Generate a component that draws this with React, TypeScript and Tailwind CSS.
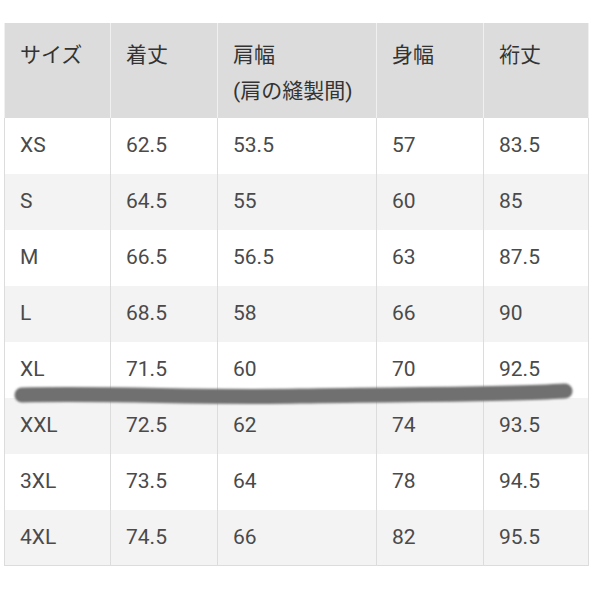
import React from "react";

const rows = [
    ["XS", "62.5", "53.5", "57", "83.5"],
    ["S", "64.5", "55", "60", "85"],
    ["M", "66.5", "56.5", "63", "87.5"],
    ["L", "68.5", "58", "66", "90"],
    ["XL", "71.5", "60", "70", "92.5"],
    ["XXL", "72.5", "62", "74", "93.5"],
    ["3XL", "73.5", "64", "78", "94.5"],
    ["4XL", "74.5", "66", "82", "95.5"],
];

const widths = ["w-[106px]", "w-[107px]", "w-[159px]", "w-[107px]", "w-[105px]"];

export default function App() {
    return (
        <div className="relative w-[594px] h-[594px] bg-white pt-[23px] pl-[4px]">
            <table className="table-fixed border-collapse w-[585px] border border-[#dcdcdc] font-['Roboto','Noto_Sans_CJK_JP',sans-serif]">
                <thead>
                    <tr className="bg-[#dcdcdc] text-[#333] text-[21px] leading-[36px] h-[94px]">
                        {["サイズ", "着丈", null, "身幅", "裄丈"].map((h, i) => (
                            <th
                                key={i}
                                className={`${widths[i]} align-top text-left font-normal pl-[15px] pt-[13px] border-x border-[#f0f0f0]`}
                            >
                                {h ?? (
                                    <>
                                        肩幅
                                        <br />
                                        (肩の縫製間)
                                    </>
                                )}
                            </th>
                        ))}
                    </tr>
                </thead>
                <tbody>
                    {rows.map((r, i) => (
                        <tr
                            key={r[0]}
                            className={`h-[56px] text-[21px] text-[#4a4a4a] ${i % 2 ? "bg-[#f3f3f3]" : "bg-white"}`}
                        >
                            {r.map((c, j) => (
                                <td key={j} className="pl-[15px] border-x border-[#dcdcdc] align-middle">
                                    {c}
                                </td>
                            ))}
                        </tr>
                    ))}
                </tbody>
            </table>

            {/* marker stroke drawn over the table */}
            <svg className="absolute left-0 top-0 pointer-events-none" width="594" height="594">
                <defs>
                    <filter id="soft" filterUnits="userSpaceOnUse" x="0" y="360" width="594" height="70">
                        <feGaussianBlur stdDeviation="1.2" />
                    </filter>
                </defs>
                <path
                    d="M22 395 C 120 393, 200 398, 300 396 S 500 395, 565 391"
                    stroke="#707070"
                    strokeWidth="15"
                    strokeLinecap="round"
                    fill="none"
                    filter="url(#soft)"
                />
            </svg>
        </div>
    );
}
